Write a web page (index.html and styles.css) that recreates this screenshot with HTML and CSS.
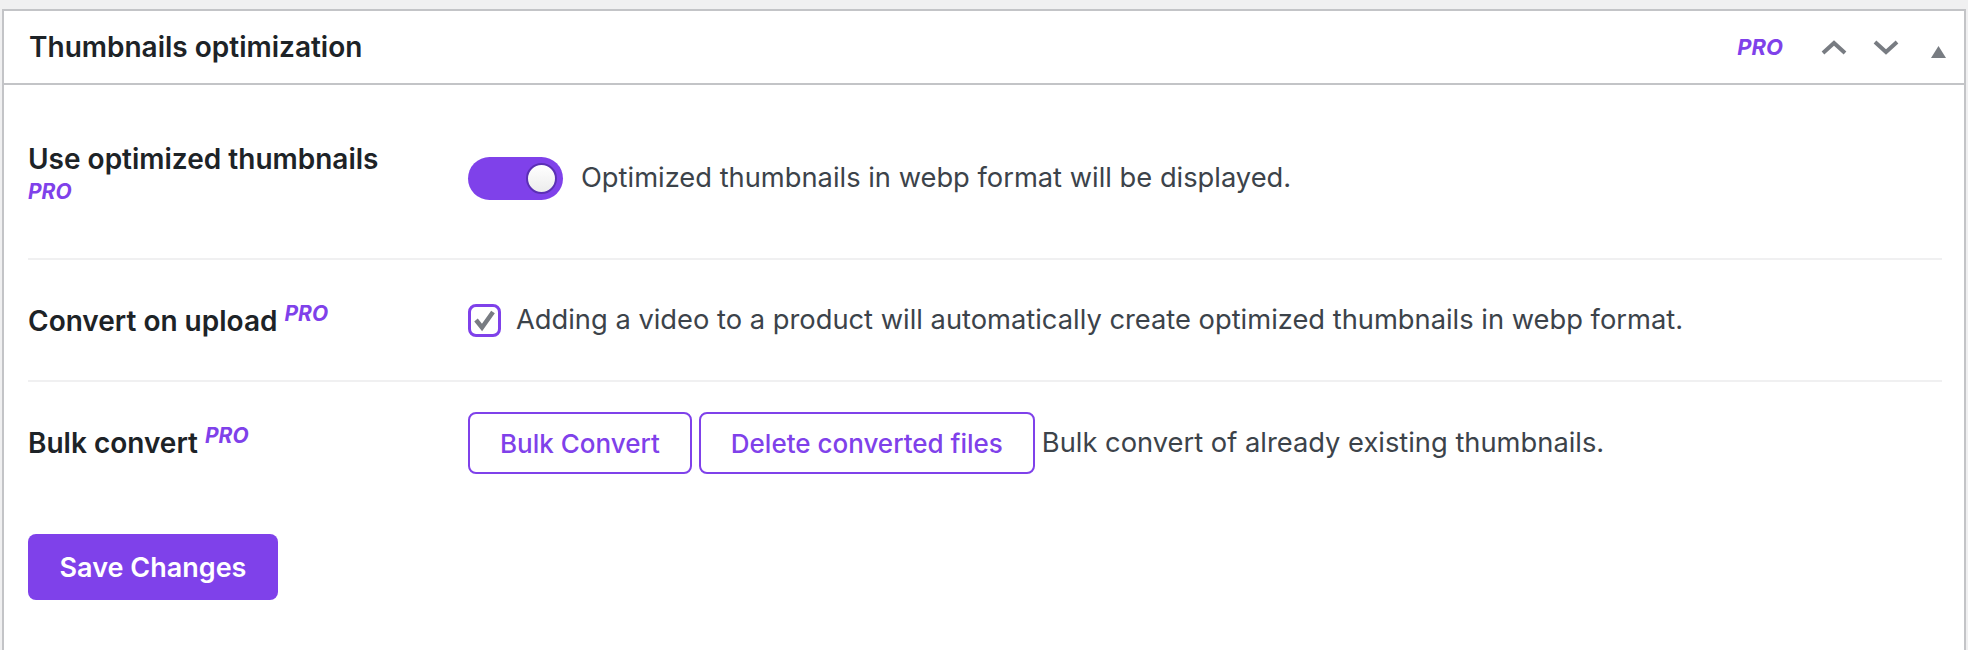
FILE: index.html
```html
<!DOCTYPE html>
<html lang="en">
<head>
  <meta charset="UTF-8">
  <meta name="viewport" content="width=device-width, initial-scale=1.0">
  <title>Thumbnails optimization</title>
  <link rel="stylesheet" href="styles.css">
</head>
<body>
<div class="wrap">
  <div class="postbox">
    <div class="postbox-header">
      <h2 class="postbox-title">Thumbnails optimization</h2>
      <div class="handle-actions">
        <span class="pro-badge">PRO</span>
        <button type="button" class="handle-btn" aria-label="Move up">
          <svg width="26" height="15" viewBox="0 0 26 15"><polyline points="2,13 13,3 24,13" fill="none" stroke="#787c82" stroke-width="4"/></svg>
        </button>
        <button type="button" class="handle-btn" aria-label="Move down">
          <svg width="26" height="15" viewBox="0 0 26 15"><polyline points="2,2 13,12 24,2" fill="none" stroke="#787c82" stroke-width="4"/></svg>
        </button>
        <button type="button" class="handle-btn toggle-btn" aria-label="Toggle panel">
          <svg width="15" height="12" viewBox="0 0 15 12"><polygon points="7.5,0 15,12 0,12" fill="#787c82"/></svg>
        </button>
      </div>
    </div>

    <div class="inside">
      <form id="thumbnailsForm">
        <div class="form-row">
          <div class="form-label">Use optimized thumbnails <sup class="pro">PRO</sup></div>
          <div class="form-field">
            <label class="switch">
              <input type="checkbox" checked>
              <span class="slider"></span>
            </label>
            <span class="description">Optimized thumbnails in webp format will be displayed.</span>
          </div>
        </div>

        <div class="form-row">
          <div class="form-label">Convert on upload <sup class="pro">PRO</sup></div>
          <div class="form-field">
            <label class="check">
              <input type="checkbox" checked>
              <span class="checkmark">
                <svg width="26" height="26" viewBox="0 0 26 26"><polyline points="4,13 10,20.5 21,5" fill="none" stroke="#787c82" stroke-width="4.5"/></svg>
              </span>
            </label>
            <span class="description">Adding a video to a product will automatically create optimized thumbnails in webp format.</span>
          </div>
        </div>

        <div class="form-row last">
          <div class="form-label">Bulk convert <sup class="pro">PRO</sup></div>
          <div class="form-field">
            <button type="button" class="button-outline">Bulk Convert</button>
            <button type="button" class="button-outline">Delete converted files</button>
            <span class="description">Bulk convert of already existing thumbnails.</span>
          </div>
        </div>

        <p class="submit">
          <input type="submit" class="button-primary" value="Save Changes">
        </p>
      </form>
    </div>
  </div>
</div>
</body>
</html>
```

FILE: styles.css
```css
body {
  margin: 0;
  background-color: #f0f0f1;
  font-family: Inter, "Noto Sans", sans-serif;
  color: #1d2327;
}
.wrap {
  padding: 9px 2px 0;
}
.postbox {
  background-color: #ffffff;
  border: 2px solid #c3c4c7;
  border-bottom: none;
}
.postbox-header {
  display: flex;
  align-items: center;
  justify-content: space-between;
  height: 72px;
  border-bottom: 2px solid #c3c4c7;
}
.postbox-title {
  margin: 0;
  padding-left: 25px;
  font-size: 28px;
  font-weight: 600;
}
.handle-actions {
  display: flex;
  align-items: center;
  height: 100%;
}
.pro-badge {
  margin-right: 25px;
  font-size: 22px;
  font-weight: 700;
  font-style: italic;
  color: #7f41ea;
}
.handle-btn {
  width: 52px;
  height: 100%;
  padding: 0;
  border: none;
  background: none;
  display: flex;
  align-items: center;
  justify-content: center;
  cursor: pointer;
}
.toggle-btn svg {
  margin-top: 9px;
}
.inside {
  padding: 13px 22px 60px 24px;
}
.form-row {
  display: flex;
  align-items: center;
  border-bottom: 2px solid #f0f0f1;
}
.form-row.last {
  border-bottom: none;
}
.form-label {
  align-self: flex-start;
  flex: none;
  width: 400px;
  padding: 41px 20px 39px 0;
  font-size: 28px;
  line-height: 40px;
  font-weight: 600;
}
.pro {
  font-size: 21px;
  font-style: italic;
  font-weight: 700;
  color: #7f41ea;
  line-height: 1;
  vertical-align: 10px;
}
.form-field {
  display: flex;
  align-items: center;
  padding: 30px 20px;
}
.description {
  font-size: 27.3px;
  line-height: 36px;
  color: #3c434a;
}

/* toggle switch */
.switch {
  position: relative;
  display: inline-block;
  width: 95px;
  height: 43px;
  margin-right: 18px;
  flex: none;
}
.switch input,
.check input {
  display: none;
}
.slider {
  position: absolute;
  inset: 0;
  background-color: #7f41ea;
  border-radius: 22px;
  cursor: pointer;
}
.slider::after {
  content: "";
  position: absolute;
  top: 6px;
  right: 6px;
  width: 27px;
  height: 27px;
  border: 2px solid #5b2fb5;
  border-radius: 50%;
  background: linear-gradient(#ffffff, #ececec);
}

/* checkbox */
.check {
  display: inline-block;
  margin-right: 15px;
  flex: none;
}
.checkmark {
  display: flex;
  align-items: center;
  justify-content: center;
  width: 27px;
  height: 27px;
  border: 3px solid #7f41ea;
  border-radius: 8px;
  background-color: #ffffff;
}

/* buttons */
.button-outline {
  height: 62px;
  padding: 0 30px;
  margin-right: 7px;
  font-family: inherit;
  font-size: 26px;
  font-weight: 500;
  color: #7f41ea;
  background-color: #ffffff;
  border: 2px solid #7f41ea;
  border-radius: 8px;
  cursor: pointer;
}
.submit {
  margin: 0;
  padding-top: 30px;
}
.button-primary {
  width: 250px;
  height: 66px;
  font-family: inherit;
  font-size: 27px;
  font-weight: 600;
  color: #ffffff;
  background-color: #7f41ea;
  border: none;
  border-radius: 8px;
  cursor: pointer;
}
```
